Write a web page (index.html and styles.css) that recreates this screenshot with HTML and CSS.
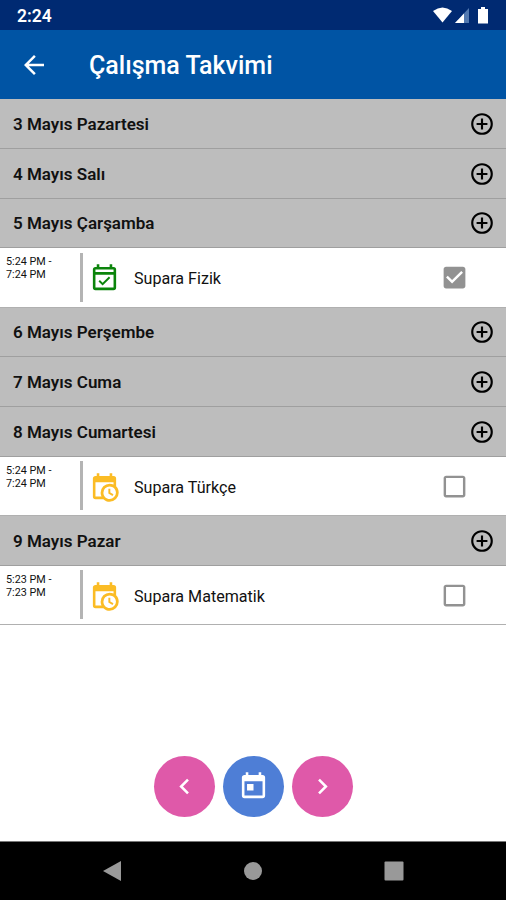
FILE: index.html
```html
<!DOCTYPE html>
<html lang="tr">
<head>
  <meta charset="UTF-8">
  <title>Çalışma Takvimi</title>
  <link rel="stylesheet" href="styles.css">
</head>
<body>

  <!-- icons -->
  <svg class="hidden">
    <symbol id="plus" viewBox="0 0 24 24"><path d="M12 20c-4.41 0-8-3.59-8-8s3.59-8 8-8 8 3.59 8 8-3.59 8-8 8m0-18A10 10 0 0 0 2 12a10 10 0 0 0 10 10 10 10 0 0 0 10-10A10 10 0 0 0 12 2m1 5h-2v4H7v2h4v4h2v-4h4v-2h-4V7z"/></symbol>
    <symbol id="cal-check" viewBox="0 0 24 24"><path d="M19 3h-1V1h-2v2H8V1H6v2H5a2 2 0 0 0-2 2v14a2 2 0 0 0 2 2h14a2 2 0 0 0 2-2V5a2 2 0 0 0-2-2m0 16H5V9h14v10M5 7V5h14v2H5m5.56 10.46l5.93-5.94-1.07-1.06-4.87 4.87-2.11-2.11-1.06 1.06 3.18 3.18z"/></symbol>
    <symbol id="cal-clock" viewBox="0 0 24 24"><path d="M15 13h1.5v2.82l2.44 1.41-.75 1.3L15 16.69V13m4-5H5v11h4.67c-.43-.91-.67-1.93-.67-3a7 7 0 0 1 7-7c1.07 0 2.09.24 3 .67V8M5 21a2 2 0 0 1-2-2V5c0-1.11.89-2 2-2h1V1h2v2h8V1h2v2h1a2 2 0 0 1 2 2v6.1c1.24 1.26 2 2.99 2 4.9a7 7 0 0 1-7 7c-1.91 0-3.64-.76-4.9-2H5m11-9.85A4.85 4.85 0 0 0 11.15 16c0 2.68 2.17 4.85 4.85 4.85A4.85 4.85 0 0 0 20.85 16c0-2.68-2.17-4.85-4.85-4.85z"/></symbol>
    <symbol id="box" viewBox="0 0 24 24"><path d="M19 5v14H5V5h14m0-2H5c-1.1 0-2 .9-2 2v14c0 1.1.9 2 2 2h14c1.1 0 2-.9 2-2V5c0-1.1-.9-2-2-2z"/></symbol>
    <symbol id="box-checked" viewBox="0 0 24 24"><path d="M19 3H5c-1.11 0-2 .9-2 2v14c0 1.1.89 2 2 2h14c1.11 0 2-.9 2-2V5c0-1.1-.89-2-2-2zm-9 14l-5-5 1.41-1.41L10 14.17l7.59-7.59L19 8l-9 9z"/></symbol>
  </svg>

  <div class="status-bar">
    <span class="clock">2:24</span>
    <svg class="status-icons" viewBox="0 0 58 18" width="58" height="18">
      <path fill="#fff" d="M0 4Q9.500-3 19 4L9.500 15.500z"/>
      <path fill="#5279b0" d="M36 1v15H22z"/>
      <path fill="#fff" d="M31 6.500V16H22z"/>
      <path fill="#fff" d="M48 0h4v2h3v14.500H45V2h3z"/>
    </svg>
  </div>

  <header class="app-bar">
    <svg class="back" viewBox="0 0 24 24"><path d="M20 11H7.830l5.590-5.590L12 4l-8 8 8 8 1.410-1.410L7.830 13H20v-2z"/></svg>
    <h1>Çalışma Takvimi</h1>
  </header>

  <main>
    <div class="day"><span>3 Mayıs Pazartesi</span><svg><use href="#plus"/></svg></div>
    <div class="day"><span>4 Mayıs Salı</span><svg><use href="#plus"/></svg></div>
    <div class="day"><span>5 Mayıs Çarşamba</span><svg><use href="#plus"/></svg></div>
    <div class="event">
      <div class="time">5:24 PM -<br>7:24 PM</div>
      <div class="bar"></div>
      <svg class="icon done"><use href="#cal-check"/></svg>
      <span class="name">Supara Fizik</span>
      <svg class="check"><use href="#box-checked"/></svg>
    </div>
    <div class="day"><span>6 Mayıs Perşembe</span><svg><use href="#plus"/></svg></div>
    <div class="day"><span>7 Mayıs Cuma</span><svg><use href="#plus"/></svg></div>
    <div class="day"><span>8 Mayıs Cumartesi</span><svg><use href="#plus"/></svg></div>
    <div class="event">
      <div class="time">5:24 PM -<br>7:24 PM</div>
      <div class="bar"></div>
      <svg class="icon waiting"><use href="#cal-clock"/></svg>
      <span class="name">Supara Türkçe</span>
      <svg class="check"><use href="#box"/></svg>
    </div>
    <div class="day"><span>9 Mayıs Pazar</span><svg><use href="#plus"/></svg></div>
    <div class="event">
      <div class="time">5:23 PM -<br>7:23 PM</div>
      <div class="bar"></div>
      <svg class="icon waiting"><use href="#cal-clock"/></svg>
      <span class="name">Supara Matematik</span>
      <svg class="check"><use href="#box"/></svg>
    </div>
  </main>

  <!-- week buttons -->
  <div class="week-buttons">
    <button class="round"><svg viewBox="0 0 24 24"><path d="M15.410 7.410L14 6l-6 6 6 6 1.410-1.410L10.830 12z"/></svg></button>
    <button class="round today"><svg viewBox="0 0 24 24"><path d="M7 10h5v5H7m12 4H5V8h14m0-5h-1V1h-2v2H8V1H6v2H5c-1.110 0-2 .9-2 2v14a2 2 0 0 0 2 2h14a2 2 0 0 0 2-2V5a2 2 0 0 0-2-2z"/></svg></button>
    <button class="round"><svg viewBox="0 0 24 24"><path d="M10 6L8.590 7.410 13.170 12l-4.580 4.590L10 18l6-6z"/></svg></button>
  </div>

  <nav class="nav-bar">
    <svg viewBox="0 0 20 20"><path d="M19 0v20L1 10z"/></svg>
    <svg viewBox="0 0 20 20"><circle cx="10" cy="10" r="9"/></svg>
    <svg viewBox="0 0 20 20"><rect x=".5" y=".5" width="19" height="19" rx="1"/></svg>
  </nav>

</body>
</html>
```
FILE: styles.css
```css
* { box-sizing: border-box; }
body {
  margin: 0;
  height: 900px;
  display: flex;
  flex-direction: column;
  font-family: Roboto, sans-serif;
  background: #fff;
  color: #111;
  overflow: hidden;
}
.hidden { display: none; }
svg { flex: none; }

.status-bar {
  height: 30px;
  padding: 2px 15px 0 17px;
  display: flex;
  align-items: center;
  justify-content: space-between;
  background: #002a72;
  color: #fff;
}
.clock { font-size: 17.5px; font-weight: 600; }

.app-bar {
  height: 69.2px;
  padding-left: 19px;
  display: flex;
  align-items: center;
  background: #0054a4;
  color: #fff;
}
.back { width: 30px; height: 30px; margin-right: 40px; fill: #fff; }
h1 { margin: 2px 0 0; font-size: 25px; font-weight: 500; }

.day {
  height: 49.7px;
  padding: 1px 11px 0 13px;
  display: flex;
  align-items: center;
  justify-content: space-between;
  background: #bdbdbd;
  border-bottom: 1px solid #9f9f9f;
  font-size: 17px;
  font-weight: 600;
}
.day svg { width: 26px; height: 26px; }

.event {
  height: 59.4px;
  display: flex;
  align-items: center;
  border-bottom: 1px solid #b0b0b0;
}
.time {
  width: 80px;
  padding: 7px 0 0 6px;
  align-self: flex-start;
  font-size: 10.8px;
  line-height: 13px;
}
.bar { width: 3px; height: 49px; background: #b4b4b4; }
.icon { width: 31px; height: 31px; margin: 3px 0 0 6px; }
.done { fill: #0b840b; }
.waiting { fill: #fbbc25; }
.name { flex: 1; margin: 3px 0 0 14px; font-size: 16.1px; }
.check { width: 29px; height: 29px; margin: 1px 37px 0 0; fill: #929292; }

.week-buttons {
  margin-top: auto;
  padding: 0 0 24px 1px;
  display: flex;
  justify-content: center;
  gap: 7.5px;
}
.round {
  width: 61.5px;
  height: 61.5px;
  padding: 0;
  display: flex;
  align-items: center;
  justify-content: center;
  border: none;
  border-radius: 50%;
  background: #df59a9;
}
.round svg { width: 31px; height: 31px; fill: #fff; }
.today { background: #4e7ed6; }

.nav-bar {
  height: 59px;
  padding: 0 102px;
  display: flex;
  align-items: center;
  justify-content: space-between;
  background: #000;
  border-top: 1px solid #777;
}
.nav-bar svg { width: 20px; height: 20px; fill: #999; }
```
